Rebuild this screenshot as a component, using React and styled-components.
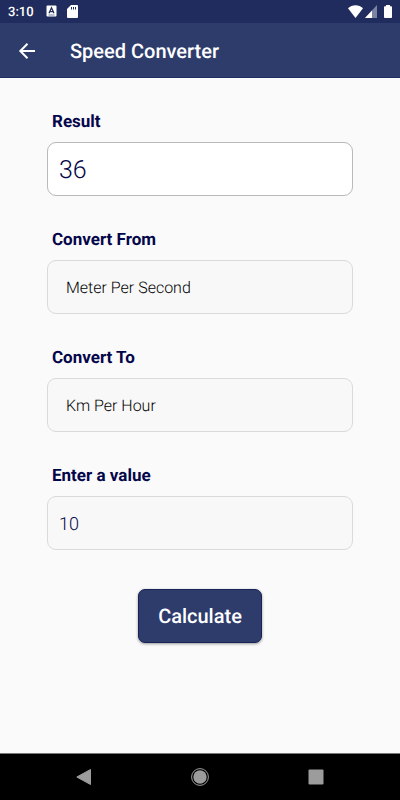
import React from 'react';
import styled, { createGlobalStyle } from 'styled-components';

const GlobalStyle = createGlobalStyle`
*{
    box-sizing:border-box;
}
body{
    margin:0;
    background:#fafafa;
    font-family:Roboto, "Liberation Sans", sans-serif;
    text-rendering:geometricPrecision;
}
button,input,select{
    text-rendering:inherit;
}
`;

const Screen = styled.div`
min-height:100vh;
display:flex;
flex-direction:column;
background:#fafafa;
`;

const StatusBar = styled.div`
height:23px;
padding:0 7px 0 8px;
display:flex;
align-items:center;
background:#202c5d;
color:#fff;
svg{
    display:block;
}
.time{
    width:38px;
    padding-top:2px;
    font-size:13px;
    font-weight:500;
    line-height:24px;
}
.left{
    display:flex;
    flex:1;
    gap:10px;
}
.right{
    display:flex;
    gap:2px;
}
`;

const AppBar = styled.header`
height:55px;
padding:1px 17px 0;
display:flex;
align-items:center;
gap:33px;
background:#2e3c6c;
border-bottom:1px solid #1f2e60;
color:#fff;
h1{
    margin:0;
    font-size:20px;
    font-weight:500;
    line-height:26px;
}
`;

const BackButton = styled.button`
width:20px;
height:20px;
padding:0;
border:0;
background:none;
color:inherit;
svg{
    display:block;
}
`;

const Form = styled.form`
flex:1;
padding:32px 47px;
display:flex;
flex-direction:column;
gap:32px;
`;

const Field = styled.div`
display:flex;
flex-direction:column;
gap:8px;
`;

const Label = styled.label`
padding-left:5px;
font-size:17px;
font-weight:700;
line-height:24px;
color:#04064a;
`;

const box = `
display:block;
width:100%;
height:54px;
margin:0;
border:1px solid #dadada;
border-radius:9px;
background:#f8f8f8;
outline:0;
font-family:inherit;
`;

const Result = styled.output`
${box}
padding:2px 11px 0;
border-color:#b9b9b9;
background:#fff;
font-size:25px;
font-weight:300;
line-height:52px;
color:#04064a;
`;

const Select = styled.select`
${box}
appearance:none;
padding:0 18px;
font-size:16px;
font-weight:300;
color:#000;
`;

const Input = styled.input`
${box}
padding:2px 11px 0;
font-size:18px;
font-weight:300;
color:#04064a;
`;

const Calculate = styled.button`
align-self:center;
min-width:124px;
height:54px;
margin-top:7px;
padding:0 18px;
border:1px solid #172258;
border-radius:7px;
background:#2e3c6c;
box-shadow:0 1px 3px rgba(0,0,0,.4);
color:#fff;
font-family:inherit;
font-size:20px;
font-weight:500;
line-height:24px;
`;

const NavBar = styled.nav`
height:47px;
padding:0 26px;
display:grid;
grid-template-columns:repeat(3,1fr);
place-items:center;
background:#000;
border-top:1px solid #777;
`;

const NavButton = styled.button`
padding:0;
border:0;
background:none;
color:#9c9c9c;
svg{
    display:block;
}
`;

const units = ['Meter Per Second', 'Km Per Hour'];

const UnitSelect = ({ id, label, value, onChange }) => (
    <Field>
        <Label htmlFor={id}>{label}</Label>
        <Select id={id} value={value} onChange={e => onChange(e.target.value)}>
            {units.map(unit => <option key={unit}>{unit}</option>)}
        </Select>
    </Field>
);

// factor of each unit to meters per second
const factors = { 'Meter Per Second': 1, 'Km Per Hour': 1 / 3.6 };

export default function App() {
    const [from, setFrom] = React.useState(units[0]);
    const [to, setTo] = React.useState(units[1]);
    const [value, setValue] = React.useState('10');
    const [result, setResult] = React.useState('36');

    const calculate = e => {
        e.preventDefault();
        const speed = Number(value) * factors[from] / factors[to];
        setResult(String(Number(speed.toFixed(4))));
    };

    return (
        <Screen>
            <GlobalStyle />
            <StatusBar>
                <span className="time">3:10</span>
                <span className="left">
                    <svg width="11" height="12" viewBox="0 0 11 12">
                        <rect x="0.5" y="0.5" width="10" height="11" rx="1" fill="#fff" />
                        <path d="M3 8.2 5.5 2.8 8 8.2M4 6.6h3" fill="none" stroke="#202c5d" strokeWidth="1.3" />
                        <path d="M2.5 10h6" stroke="#202c5d" strokeWidth=".6" />
                    </svg>
                    <svg width="11" height="13" viewBox="0 0 11 13">
                        <path d="M4 0h6a1 1 0 0 1 1 1v11a1 1 0 0 1-1 1H1a1 1 0 0 1-1-1V4z" fill="#fff" />
                        <path d="M4.5 2v2.5M6.5 2v2.5M8.5 2v2.5" stroke="#202c5d" />
                    </svg>
                </span>
                <span className="right">
                    <svg width="15" height="13" viewBox="0 0 15 13">
                        <path d="M0 3.2C4-.8 11-.8 15 3.2L7.5 13z" fill="#fff" />
                    </svg>
                    <svg width="12" height="13" viewBox="0 0 12 13">
                        <path d="M12 0v13H0z" fill="#7b83a4" />
                        <path d="M7 5.4V13H0z" fill="#fff" />
                    </svg>
                    <svg width="14" height="13" viewBox="0 0 14 13">
                        <path d="M7 0h4v1.3h1.2a.8.8 0 0 1 .8.8v10.1a.8.8 0 0 1-.8.8H5.800a.8.8 0 0 1-.8-.8V2.1a.8.8 0 0 1 .8-.8H7z" fill="#fff" />
                    </svg>
                </span>
            </StatusBar>
            <AppBar>
                <BackButton type="button" aria-label="Back">
                    <svg width="20" height="20" viewBox="0 0 20 20" fill="none" stroke="currentColor" strokeWidth="2">
                        <path d="M18 10H4M10.5 2.8 3.3 10l7.2 7.2" />
                    </svg>
                </BackButton>
                <h1>Speed Converter</h1>
            </AppBar>
            <Form onSubmit={calculate}>
                <Field>
                    <Label htmlFor="result">Result</Label>
                    <Result id="result">{result}</Result>
                </Field>
                <UnitSelect id="from" label="Convert From" value={from} onChange={setFrom} />
                <UnitSelect id="to" label="Convert To" value={to} onChange={setTo} />
                <Field>
                    <Label htmlFor="value">Enter a value</Label>
                    <Input id="value" inputMode="decimal" value={value} onChange={e => setValue(e.target.value)} />
                </Field>
                <Calculate type="submit">Calculate</Calculate>
            </Form>
            <NavBar>
                <NavButton type="button" aria-label="Back">
                    <svg width="16" height="16" viewBox="0 0 16 16">
                        <path d="M14.5.5v15L.8 8z" fill="currentColor" stroke="currentColor" strokeLinejoin="round" />
                    </svg>
                </NavButton>
                <NavButton type="button" aria-label="Home">
                    <svg width="18" height="18" viewBox="0 0 18 18">
                        <circle cx="9" cy="9" r="8.4" fill="none" stroke="currentColor" />
                        <circle cx="9" cy="9" r="6.7" fill="currentColor" />
                    </svg>
                </NavButton>
                <NavButton type="button" aria-label="Recent apps">
                    <svg width="16" height="16" viewBox="0 0 16 16">
                        <rect x="0.5" y="0.5" width="15" height="15" rx="1" fill="currentColor" />
                    </svg>
                </NavButton>
            </NavBar>
        </Screen>
    );
}
